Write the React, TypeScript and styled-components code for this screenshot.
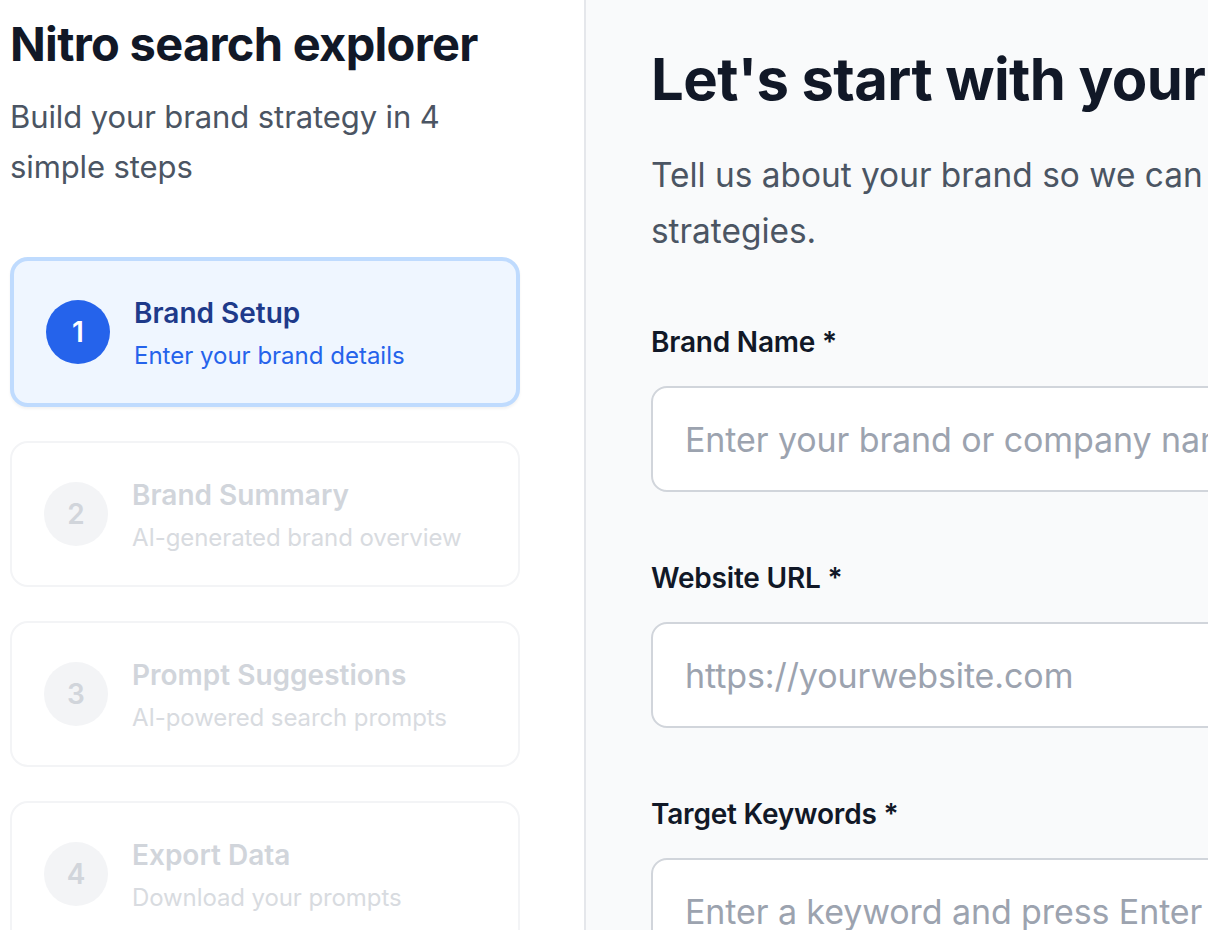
import React from "react";
import styled, { createGlobalStyle } from "styled-components";

const GlobalStyle = createGlobalStyle`
  html, body {
    margin: 0;
    padding: 0;
    width: 1208px;
    height: 930px;
    overflow: hidden;
    background: #ffffff;
  }
  body {
    font-family: Inter, "Noto Sans", "Liberation Sans", sans-serif;
    -webkit-font-smoothing: antialiased;
  }
  * { box-sizing: border-box; }
`;

const Layout = styled.div`
  display: flex;
  width: 1208px;
  height: 930px;
  overflow: hidden;
`;

const Sidebar = styled.aside`
  flex: 0 0 586px;
  width: 586px;
  background: #ffffff;
  border-right: 2px solid #e5e7eb;
  padding: 12px 64px 0 10px;
  display: flex;
  flex-direction: column;
`;

const AppTitle = styled.h1`
  margin: 0;
  font-size: 47px;
  line-height: 64px;
  font-weight: 700;
  color: #111827;
  letter-spacing: -0.7px;
`;

const AppSubtitle = styled.p`
  margin: 16px 0 0;
  font-size: 31px;
  line-height: 50px;
  font-weight: 400;
  color: #4b5563;
  letter-spacing: -0.1px;
`;

const StepList = styled.div`
  margin-top: 65px;
  display: flex;
  flex-direction: column;
  gap: 34px;
`;

const StepCard = styled.div<{ $active?: boolean }>`
  display: flex;
  align-items: center;
  gap: 24px;
  padding: 32px;
  border-radius: 18px;
  border: ${(p) => (p.$active ? "4px solid #bfdbfe" : "2px solid #f3f4f6")};
  background: ${(p) => (p.$active ? "#eff6ff" : "#ffffff")};
  box-shadow: ${(p) => (p.$active ? "0 2px 3px rgba(0,0,0,0.05)" : "none")};
`;

const StepCircle = styled.div<{ $active?: boolean }>`
  flex: 0 0 64px;
  width: 64px;
  height: 64px;
  border-radius: 50%;
  display: flex;
  align-items: center;
  justify-content: center;
  background: ${(p) => (p.$active ? "#2563eb" : "#f3f4f6")};
  color: ${(p) => (p.$active ? "#ffffff" : "#d1d5db")};
  font-size: 28px;
  font-weight: 600;
`;

const StepText = styled.div`
  display: flex;
  flex-direction: column;
  gap: 8px;
`;

const StepTitle = styled.div<{ $active?: boolean }>`
  font-size: 28px;
  line-height: 40px;
  font-weight: 600;
  color: ${(p) => (p.$active ? "#1e3a8a" : "#d1d5db")};
`;

const StepDesc = styled.div<{ $active?: boolean }>`
  font-size: 24px;
  line-height: 30px;
  font-weight: 400;
  color: ${(p) => (p.$active ? "#2563eb" : "#d8dbe0")};
  letter-spacing: ${(p) => (p.$active ? "0" : "-0.1px")};
`;

const Main = styled.main`
  flex: 1 1 auto;
  min-width: 0;
  background: #f9fafb;
  overflow: hidden;
  padding: 43px 0 0 65px;
`;

const Content = styled.div`
  width: 1400px;
`;

const Heading = styled.h2`
  margin: 0;
  font-size: 58px;
  line-height: 72px;
  font-weight: 700;
  color: #111827;
  white-space: nowrap;
  letter-spacing: -0.6px;
`;

const Lead = styled.p`
  margin: 32px 0 0;
  font-size: 33.4px;
  line-height: 56px;
  color: #4b5563;
`;

const Form = styled.form`
  margin-top: 63px;
  display: flex;
  flex-direction: column;
  gap: 66px;
`;

const Field = styled.div`
  display: flex;
  flex-direction: column;
  gap: 24px;
`;

const Label = styled.label`
  font-size: 28px;
  line-height: 40px;
  font-weight: 600;
  color: #111827;
  letter-spacing: -0.2px;
`;

const TextInput = styled.input`
  width: 1300px;
  height: 106px;
  padding: 0 32px;
  border: 2px solid #d1d5db;
  border-radius: 16px;
  background: #ffffff;
  font-family: inherit;
  font-size: 34px;
  letter-spacing: -0.1px;
  color: #111827;
  outline: none;
  &::placeholder {
    color: #9ca3af;
  }
`;

const steps = [
  { n: 1, title: "Brand Setup", desc: "Enter your brand details" },
  { n: 2, title: "Brand Summary", desc: "AI-generated brand overview" },
  { n: 3, title: "Prompt Suggestions", desc: "AI-powered search prompts" },
  { n: 4, title: "Export Data", desc: "Download your prompts" },
];

export default function App() {
  return (
    <>
      <GlobalStyle />
      <Layout>
        <Sidebar>
          <AppTitle>Nitro search explorer</AppTitle>
          <AppSubtitle>Build your brand strategy in 4 simple steps</AppSubtitle>
          <StepList>
            {steps.map((s) => {
              const active = s.n === 1;
              return (
                <StepCard key={s.n} $active={active}>
                  <StepCircle $active={active}>{s.n}</StepCircle>
                  <StepText>
                    <StepTitle $active={active}>{s.title}</StepTitle>
                    <StepDesc $active={active}>{s.desc}</StepDesc>
                  </StepText>
                </StepCard>
              );
            })}
          </StepList>
        </Sidebar>
        <Main>
          <Content>
            <Heading>Let's start with your brand</Heading>
            <Lead>
              Tell us about your brand so we can create personalized AI search
              <br />
              strategies.
            </Lead>
            <Form onSubmit={(e) => e.preventDefault()}>
              <Field>
                <Label htmlFor="brand">Brand Name *</Label>
                <TextInput id="brand" placeholder="Enter your brand or company name" />
              </Field>
              <Field>
                <Label htmlFor="url">Website URL *</Label>
                <TextInput id="url" placeholder="https://yourwebsite.com" />
              </Field>
              <Field>
                <Label htmlFor="kw">Target Keywords *</Label>
                <TextInput id="kw" placeholder="Enter a keyword and press Enter" />
              </Field>
            </Form>
          </Content>
        </Main>
      </Layout>
    </>
  );
}
